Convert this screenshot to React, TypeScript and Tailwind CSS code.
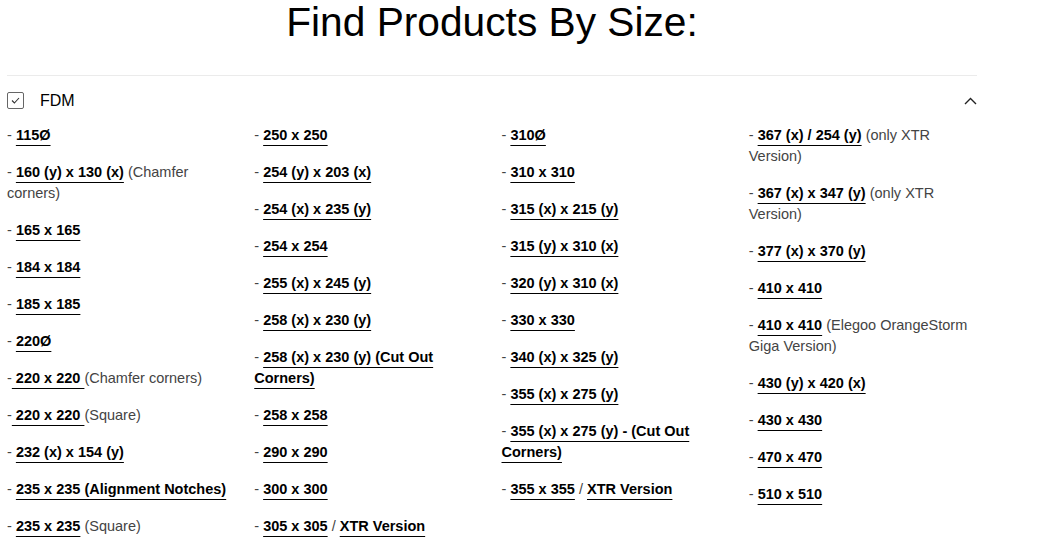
import React from "react";

type Item = {
  links: string[];
  note?: string;
  lead?: boolean;
};

const columns: Item[][] = [
  [
    { links: ["115Ø"] },
    { links: ["160 (y) x 130 (x)"], note: "(Chamfer corners)" },
    { links: ["165 x 165"] },
    { links: ["184 x 184"] },
    { links: ["185 x 185"] },
    { links: ["220Ø"] },
    { links: ["220 x 220"], note: "(Chamfer corners)", lead: true },
    { links: ["220 x 220"], note: "(Square)", lead: true },
    { links: ["232 (x) x 154 (y)"] },
    { links: ["235 x 235 (Alignment Notches)"] },
    { links: ["235 x 235"], note: "(Square)" },
  ],
  [
    { links: ["250 x 250"] },
    { links: ["254 (y) x 203 (x)"] },
    { links: ["254 (x) x 235 (y)"] },
    { links: ["254 x 254"] },
    { links: ["255 (x) x 245 (y)"] },
    { links: ["258 (x) x 230 (y)"] },
    { links: ["258 (x) x 230 (y) (Cut Out Corners)"] },
    { links: ["258 x 258"] },
    { links: ["290 x 290"] },
    { links: ["300 x 300"] },
    { links: ["305 x 305", "XTR Version"] },
  ],
  [
    { links: ["310Ø"] },
    { links: ["310 x 310"] },
    { links: ["315 (x) x 215 (y)"] },
    { links: ["315 (y) x 310 (x)"] },
    { links: ["320 (y) x 310 (x)"] },
    { links: ["330 x 330"] },
    { links: ["340 (x) x 325 (y)"] },
    { links: ["355 (x) x 275 (y)"] },
    { links: ["355 (x) x 275 (y) - (Cut Out Corners)"] },
    { links: ["355 x 355", "XTR Version"] },
  ],
  [
    { links: ["367 (x) / 254 (y)"], note: "(only XTR Version)" },
    { links: ["367 (x) x 347 (y)"], note: "(only XTR Version)" },
    { links: ["377 (x) x 370 (y)"] },
    { links: ["410 x 410"] },
    { links: ["410 x 410"], note: "(Elegoo OrangeStorm Giga Version)" },
    { links: ["430 (y) x 420 (x)"] },
    { links: ["430 x 430"] },
    { links: ["470 x 470"] },
    { links: ["510 x 510"] },
  ],
];

function SizeLink({ text }: { text: string }) {
  return (
    <a
      href="#"
      className="font-bold text-black underline decoration-1 underline-offset-[5px]"
    >
      {text}
    </a>
  );
}

function Row({ item }: { item: Item }) {
  return (
    <li className="text-[#444]">
      -{item.lead ? "" : " "}
      {item.links.map((l, i) => (
        <React.Fragment key={i}>
          {i > 0 && " / "}
          <SizeLink text={item.lead ? ` ${l} ` : l} />
        </React.Fragment>
      ))}
      {item.note && (item.lead ? item.note : ` ${item.note}`)}
    </li>
  );
}

export default function App() {
  return (
    <div
      className="min-h-screen bg-white text-black"
      style={{ fontFamily: '"Liberation Sans", Arial, sans-serif' }}
    >
      <div className="ml-[7px] w-[970px]">
        <h1 className="text-center text-[40.7px] font-normal leading-[44px]">
          Find Products By Size:
        </h1>
        <div className="mt-[31px] border-t border-[#ebebeb]">
          <div className="flex h-[49px] items-center justify-between">
            <div className="flex items-center gap-4">
              <span className="flex h-[17px] w-[17px] items-center justify-center rounded-[2px] border border-[#666]">
                <svg width="9" height="7" viewBox="0 0 9 7" fill="none">
                  <path d="M1 3.5L3.4 6L8 1" stroke="#333" strokeWidth="1.1" />
                </svg>
              </span>
              <span className="text-[16px]">FDM</span>
            </div>
            <svg width="13" height="8" viewBox="0 0 13 8" fill="none">
              <path d="M1 7L6.5 1.5L12 7" stroke="#222" strokeWidth="1.4" />
            </svg>
          </div>
          <div className="grid grid-cols-4 gap-x-[19px] text-[14.5px] leading-[21px]">
            {columns.map((col, ci) => (
              <ul key={ci} className="flex flex-col gap-4">
                {col.map((item, ii) => (
                  <Row key={ii} item={item} />
                ))}
              </ul>
            ))}
          </div>
        </div>
      </div>
    </div>
  );
}
